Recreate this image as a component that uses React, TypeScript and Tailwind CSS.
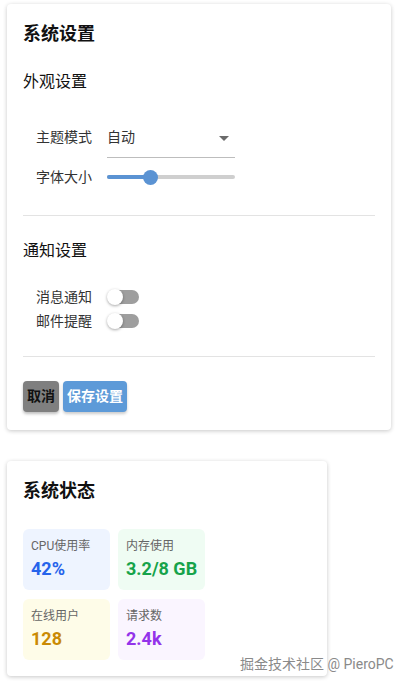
import React from "react";

const stats = [
  { label: "CPU使用率", value: "42%", box: "bg-[#eef4ff]", text: "text-[#2563eb]" },
  { label: "内存使用", value: "3.2/8 GB", box: "bg-[#effcf3]", text: "text-[#16a34a]" },
  { label: "在线用户", value: "128", box: "bg-[#fefce8]", text: "text-[#ca8a04]" },
  { label: "请求数", value: "2.4k", box: "bg-[#faf5ff]", text: "text-[#9333ea]" },
];

function Toggle() {
  return (
    <div className="relative w-[32px] h-[16px] flex items-center">
      <div className="absolute left-[2px] right-0 h-[14px] rounded-full bg-[#9e9e9e]" />
      <div className="absolute left-0 w-[16px] h-[16px] rounded-full bg-white shadow-[0_1px_3px_rgba(0,0,0,0.35)]" />
    </div>
  );
}

export default function App() {
  return (
    <div
      className="relative h-[686px] w-[412px] bg-white text-[#222] overflow-hidden"
      style={{ fontFamily: "Roboto, 'Noto Sans CJK SC', sans-serif" }}
    >
      {/* 系统设置 */}
      <div className="ml-[7px] mt-[4px] w-[384px] bg-white rounded-[4px] shadow-[0_1px_4px_rgba(0,0,0,0.22)] px-4 pt-4 pb-[18px]">
        <h2 className="text-[18px] leading-[27px] font-bold text-[#111]">系统设置</h2>
        <h3 className="mt-[23px] text-[16px] leading-[24px] text-[#111]">外观设置</h3>

        <div className="mt-[26px] flex h-[38px]">
          <span className="ml-[13px] w-[71px] pt-[7px] text-[14px] leading-[20px] text-[#333]">主题模式</span>
          <div className="w-[128px] border-b border-[#bdbdbd] flex items-start justify-between pt-[7px]">
            <span className="text-[14px] leading-[20px] text-[#333]">自动</span>
            <svg width="10" height="6" viewBox="0 0 10 6" className="mt-[9px] mr-[6px]">
              <path d="M0 0h10L5 5z" fill="#6b6b6b" />
            </svg>
          </div>
        </div>

        <div className="mt-[9px] flex h-[20px] items-center">
          <span className="ml-[13px] w-[71px] text-[14px] leading-[20px] text-[#333]">字体大小</span>
          <div className="relative w-[128px] h-[20px] flex items-center">
            <div className="absolute left-0 right-0 h-[4px] rounded-full bg-[#cfcfcf]" />
            <div className="absolute left-0 w-[43px] h-[4px] rounded-full bg-[#5b93d3]" />
            <div className="absolute left-[36px] w-[15px] h-[15px] rounded-full bg-[#5b93d3]" />
          </div>
        </div>

        <div className="mt-[28px] h-px bg-[#e3e3e3]" />

        <h3 className="mt-[23px] text-[16px] leading-[24px] text-[#111]">通知设置</h3>

        <div className="mt-[22px] flex h-[24px] items-center">
          <span className="ml-[13px] w-[71px] text-[14px] leading-[20px] text-[#333]">消息通知</span>
          <Toggle />
        </div>
        <div className="flex h-[24px] items-center">
          <span className="ml-[13px] w-[71px] text-[14px] leading-[20px] text-[#333]">邮件提醒</span>
          <Toggle />
        </div>

        <div className="mt-[23px] h-px bg-[#e3e3e3]" />

        <div className="mt-[24px] flex gap-[4px]">
          <button className="h-[31px] px-[4px] rounded-[4px] bg-[#7f7f7f] text-[14px] font-bold text-[#111] shadow-[0_2px_3px_rgba(0,0,0,0.25)]">
            取消
          </button>
          <button className="h-[31px] px-[4px] rounded-[4px] bg-[#5d9ad8] text-[14px] font-bold text-white shadow-[0_2px_3px_rgba(0,0,0,0.2)]">
            保存设置
          </button>
        </div>
      </div>

      {/* 系统状态 */}
      <div className="ml-[7px] mt-[31px] w-[320px] bg-white rounded-[4px] shadow-[0_1px_4px_rgba(0,0,0,0.22)] px-4 pt-4 pb-[16px]">
        <h2 className="text-[18px] leading-[27px] font-bold text-[#111]">系统状态</h2>
        <div className="mt-[25px] grid grid-cols-[87px_87px] gap-x-[8px] gap-y-[9px]">
          {stats.map(s => (
            <div key={s.label} className={`h-[61px] rounded-[6px] px-[8px] pt-[8px] ${s.box}`}>
              <div className="text-[12px] leading-[18px] text-[#666] whitespace-nowrap">{s.label}</div>
              <div className={`mt-[2px] text-[18px] leading-[24px] font-bold whitespace-nowrap ${s.text}`}>{s.value}</div>
            </div>
          ))}
        </div>
      </div>

      {/* 水印 */}
      <div className="absolute left-[240px] top-[654px] text-[14px] leading-[20px] text-[#8a8a8a] whitespace-nowrap [text-shadow:0_0_2px_#fff]">
        掘金技术社区 @ PieroPC
      </div>
    </div>
  );
}
